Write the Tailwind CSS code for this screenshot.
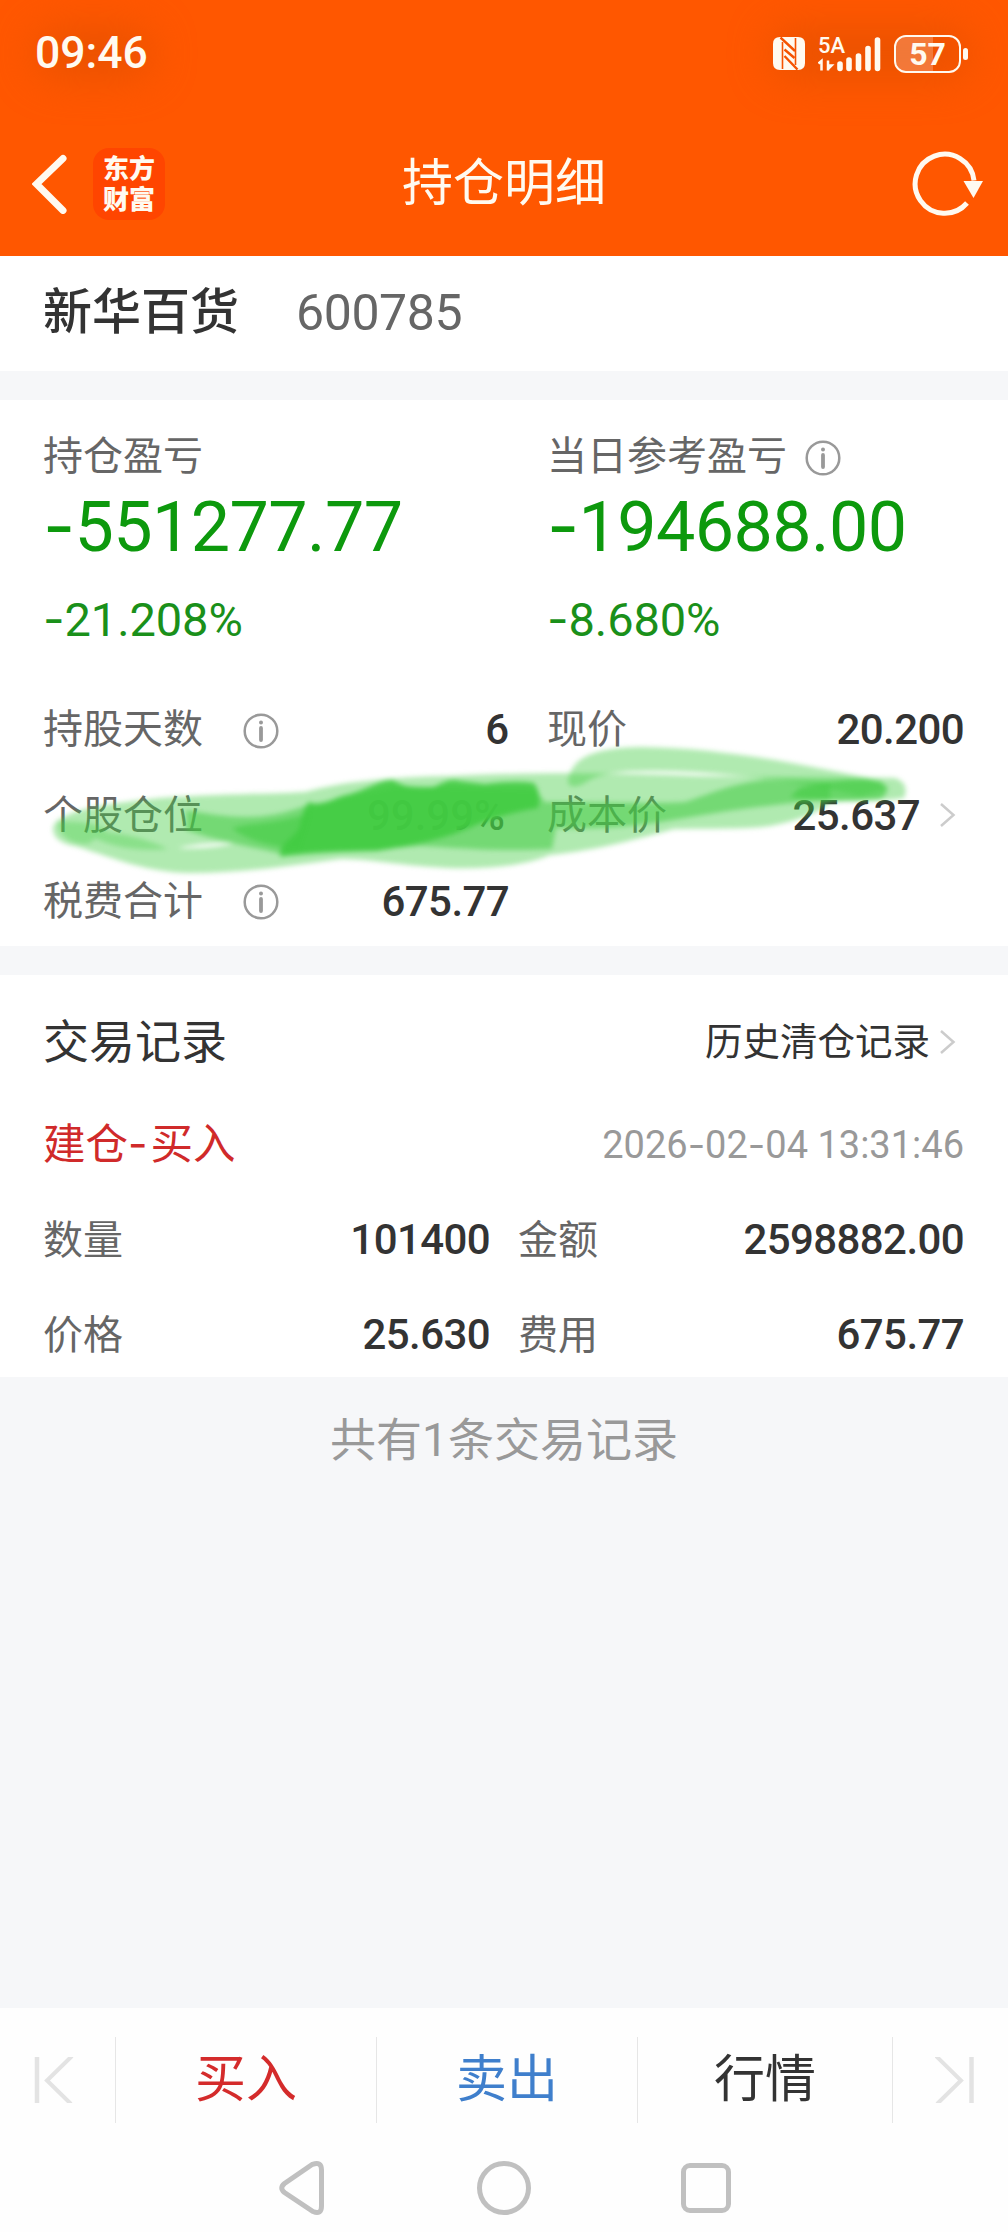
<!DOCTYPE html>
<html lang="zh-CN">
<head>
    <meta charset="UTF-8">
    <meta name="viewport" content="width=device-width, initial-scale=1.0">
    <title>持仓明细</title>
    <script src="https://cdn.jsdelivr.net/npm/@tailwindcss/browser@4"></script>
</head>
<body class="bg-[#f6f7f9] font-[Roboto,'Noto_Sans_CJK_SC',sans-serif] text-[#333]">
    <div class="flex h-[2232px] w-[1008px] flex-col overflow-hidden">

        <!-- Status bar + title bar -->
        <header class="relative h-[256px] shrink-0 overflow-hidden bg-[#ff5700] text-[#fffaf0]">
            <div class="absolute top-[28px] left-[34px] h-[50px] w-[120px] rounded-full bg-[#e25000]/70 blur-[20px]"></div>
            <div class="absolute top-[28px] left-[770px] h-[50px] w-[200px] rounded-full bg-[#e25000]/70 blur-[20px]"></div>

            <div class="relative flex h-[104px] items-center justify-between pt-[3px] pr-[40px] pl-[35px]">
                <span class="text-[44.5px] leading-none font-medium">09:46</span>
                <div class="flex items-center">
                    <svg class="h-[33px] w-[32px]" viewBox="0 0 32 33" fill="#fffaf0">
                        <path d="M7 0H25Q32 0 32 7V26Q32 33 25 33H7Q0 33 0 26V7Q0 0 7 0z"/>
                        <path d="M9.500 5V32M22.500 1V28" fill="none" stroke="#f55300" stroke-width="1.600"/>
                        <path d="M7.500 .5L22 14M11.500 12.500L21.500 21M11.500 19L24.500 32.500" fill="none" stroke="#f55300" stroke-width="2.400"/>
                    </svg>
                    <div class="relative ml-[13px] h-[36px] w-[63px]">
                        <span class="absolute top-0 left-0 text-[22px] leading-[20px] font-medium">5A</span>
                        <svg class="absolute inset-0 h-[36px] w-[63px]" viewBox="0 0 63 36" fill="none" stroke="#fffaf0">
                            <path d="M.5 27.500L3.500 25v9.500M10 24.500v10M10 33l3.500-3.500h-3" stroke-width="2.500"/>
                            <path d="M22 28v4.500M31 24v8.500M40.500 20v12.500M50 12.500v20M59.500 4v28.500" stroke-width="5.600" stroke-linecap="round"/>
                        </svg>
                    </div>
                    <div class="relative ml-[13px] flex h-[38px] w-[67px] items-center justify-center overflow-hidden rounded-[12px] border-[2.500px] border-[#fffaf0]">
                        <div class="absolute inset-y-0 left-0 w-[37px] bg-white/22"></div>
                        <span class="relative text-[32px] leading-none font-bold">57</span>
                    </div>
                    <div class="ml-[2px] h-[12px] w-[5px] rounded-full bg-[#fffaf0]"></div>
                </div>
            </div>

            <div class="relative flex h-[152px] items-center pr-[23px] pl-[32px]">
                <svg class="mt-[8px] h-[60px] w-[36px]" viewBox="0 0 36 60" fill="none" stroke="#fffaf0" stroke-width="7" stroke-linecap="round">
                    <path d="M31 4.500L4.500 30L31 56.500"/>
                </svg>
                <div class="mt-[8px] ml-[25px] flex h-[72px] w-[72px] flex-col items-center justify-center rounded-[16px] bg-[#ff4500] pb-[5px] font-['Noto_Sans_CJK_SC',sans-serif] text-[26px] leading-[31px] font-black">
                    <span>东方</span>
                    <span>财富</span>
                </div>
                <h1 class="absolute inset-x-0 top-[43px] text-center text-[51px] leading-[74px]">持仓明细</h1>
                <svg class="mt-[8px] ml-auto h-[72px] w-[74px]" viewBox="0 0 74 72" fill="none">
                    <path d="M63.500 33.500A29.500 29.500 0 1 0 56.500 56" transform="translate(-.5 -1)" stroke="#fffaf0" stroke-width="5"/>
                    <path d="M52.500 33H72L62.500 50z" fill="#fffaf0"/>
                </svg>
            </div>
        </header>

        <!-- Stock name -->
        <section class="flex h-[115px] shrink-0 items-center bg-white px-[43px] pb-[2px]">
            <span class="text-[49px] leading-none font-medium">新华百货</span>
            <span class="ml-[57px] text-[50px] leading-none tracking-[-0.4px] text-[#666]">600785</span>
        </section>

        <!-- Position details -->
        <section class="relative mt-[29px] h-[546px] shrink-0 bg-white pt-[30px] pr-[44px] pl-[43px] text-[40px]">
            <div class="grid grid-cols-[504px_1fr]">
                <div>
                    <div class="flex h-[50px] items-center pt-[3px] text-[#666]">持仓盈亏</div>
                    <div class="h-[90px] text-[70px] leading-[91px] tracking-[-0.6px] text-[#0d990d]"><span class="font-[Inter]">-</span>551277.77</div>
                    <div class="h-[98px] text-[47px] leading-[98px] tracking-[-0.1px] text-[#1a901a]"><span class="font-[Inter]">-</span>21.208%</div>
                </div>
                <div>
                    <div class="flex h-[50px] items-center pt-[3px] text-[#666]">当日参考盈亏
                        <svg class="mt-[2px] ml-[18px] size-[36px]" viewBox="0 0 36 36" fill="none" stroke="#999" stroke-width="2.500">
                            <circle cx="18" cy="18" r="16.300"/>
                            <path d="M18 15v12" stroke-width="3.800" stroke-linecap="round"/>
                            <circle cx="18" cy="9.500" r="2" fill="#999" stroke="none"/>
                        </svg>
                    </div>
                    <div class="h-[90px] text-[70px] leading-[91px] tracking-[-0.6px] text-[#0d990d]"><span class="font-[Inter]">-</span>194688.00</div>
                    <div class="h-[98px] text-[47px] leading-[98px] tracking-[-0.1px] text-[#1a901a]"><span class="font-[Inter]">-</span>8.680%</div>
                </div>
            </div>

            <div class="mt-[18px] grid grid-cols-[466px_416px] gap-x-[39px]">
                <div class="flex h-[86px] items-center">
                    <span class="pt-[2px] text-[#666]">持股天数</span>
                    <svg class="mt-[3px] ml-[40px] size-[36px]" viewBox="0 0 36 36" fill="none" stroke="#999" stroke-width="2.500">
                        <circle cx="18" cy="18" r="16.300"/>
                        <path d="M18 15v12" stroke-width="3.800" stroke-linecap="round"/>
                        <circle cx="18" cy="9.500" r="2" fill="#999" stroke="none"/>
                    </svg>
                    <span class="ml-auto text-[42px] font-medium">6</span>
                </div>
                <div class="flex h-[86px] items-center justify-between">
                    <span class="-ml-px pt-[2px] text-[#666]">现价</span>
                    <span class="text-[42px] font-medium tracking-[-0.6px]">20.200</span>
                </div>
                <div class="flex h-[86px] items-center justify-between">
                    <span class="pt-[2px] text-[#666]">个股仓位</span>
                    <span class="pr-[4px] text-[42px] font-medium">99.99%</span>
                </div>
                <div class="flex h-[86px] items-center">
                    <span class="-ml-px pt-[2px] text-[#666]">成本价</span>
                    <span class="ml-auto text-[42px] font-medium tracking-[-0.6px]">25.637</span>
                    <svg class="mr-[8px] ml-[19px] h-[26px] w-[17px]" viewBox="0 0 17 26" fill="none" stroke="#ccc" stroke-width="2.500">
                        <path d="M2 2l12.500 11L2 24"/>
                    </svg>
                </div>
                <div class="flex h-[86px] items-center">
                    <span class="pt-[2px] text-[#666]">税费合计</span>
                    <svg class="mt-[2px] ml-[40px] size-[36px]" viewBox="0 0 36 36" fill="none" stroke="#999" stroke-width="2.500">
                        <circle cx="18" cy="18" r="16.300"/>
                        <path d="M18 15v12" stroke-width="3.800" stroke-linecap="round"/>
                        <circle cx="18" cy="9.500" r="2" fill="#999" stroke="none"/>
                    </svg>
                    <span class="ml-auto text-[42px] font-medium tracking-[-0.6px]">675.77</span>
                </div>
            </div>

            <!-- Marker strokes over the position row -->
            <svg class="absolute top-[340px] left-0 h-[150px] w-[1008px] blur-[2.5px]" viewBox="0 740 1008 150" fill="#43cc43">
                <path fill-opacity=".42" d="M53 828C56 812 100 804 160 798C220 794 270 794 305 792C340 782 390 777 450 776C540 772 620 773 700 776L895 778Q910 783 904 798C880 802 850 800 830 802C820 812 800 820 770 826C740 830 710 828 674 829C640 838 600 850 550 855C520 868 470 870 433 867C390 864 370 859 340 859C290 866 240 873 190 873C145 872 120 860 75 846C58 843 53 836 53 828ZM178 848C205 849 225 846 234 843C215 842 190 845 178 848Z"/>
                <path fill-opacity=".42" d="M568 782C570 755 600 748 640 747C720 748 790 762 868 778L890 788L860 796C800 780 720 772 660 771C620 771 600 772 583 784Q570 790 568 782Z"/>
                <path fill-opacity=".35" d="M58 822Q90 820 108 830L88 844Q60 844 58 822ZM95 832C120 832 145 838 168 849C135 852 110 846 95 838Z"/>
                <path fill-opacity=".55" d="M186 810C230 818 262 822 305 806L400 786L535 790L545 802C600 802 650 804 685 802C710 794 730 784 765 780L830 782L830 799C780 804 730 810 685 818C640 826 600 830 556 828L552 849C500 852 460 848 421 846L290 856C250 846 220 842 186 830Z"/>
                <path fill-opacity=".65" d="M800 788Q850 776 880 781Q894 790 880 799C850 802 820 802 790 797Z"/>
                <path fill-opacity=".6" d="M232 828C255 822 280 824 312 812L300 850C270 846 245 840 232 828Z"/>
                <path fill-opacity=".9" d="M281 857C276 845 296 838 300 826C302 816 304 806 309 802C325 808 330 798 350 794C370 788 380 780 393 780C405 788 418 788 433 787C445 782 450 778 460 781L485 784Q515 780 534 783Q542 794 538 808Q510 812 478 824C450 838 410 846 377 851C340 852 310 850 281 857Z"/>
            </svg>
        </section>

        <!-- Trade records -->
        <section class="mt-[29px] h-[402px] shrink-0 bg-white pt-[20px] pr-[44px] pl-[43px]">
            <div class="flex h-[94px] items-center">
                <h2 class="text-[46px]">交易记录</h2>
                <span class="ml-auto text-[37.500px]">历史清仓记录</span>
                <svg class="mr-[8px] ml-[9px] h-[26px] w-[17px]" viewBox="0 0 17 26" fill="none" stroke="#ccc" stroke-width="2.500">
                    <path d="M2 2l12.500 11L2 24"/>
                </svg>
            </div>
            <div class="flex h-[110px] items-center justify-between pt-px">
                <span class="text-[42.500px] text-[#d02a2a]">建仓<span class="pr-[3px] font-[Inter]">-</span>买入</span>
                <span class="text-[38px] text-[#999]">2026<span class="font-[Inter]">-</span>02<span class="font-[Inter]">-</span>04 13:31:46</span>
            </div>
            <div class="grid grid-cols-[447px_445px] gap-x-[29px] text-[40px]">
                <div class="flex h-[80px] items-center justify-between">
                    <span class="pt-[3px] text-[#666]">数量</span>
                    <span class="text-[42px] font-medium tracking-[-0.6px]">101400</span>
                </div>
                <div class="flex h-[80px] items-center justify-between">
                    <span class="-ml-px pt-[3px] text-[#666]">金额</span>
                    <span class="text-[42px] font-medium tracking-[-0.6px]">2598882.00</span>
                </div>
                <div class="mt-[15px] flex h-[80px] items-center justify-between">
                    <span class="pt-[3px] text-[#666]">价格</span>
                    <span class="text-[42px] font-medium tracking-[-0.6px]">25.630</span>
                </div>
                <div class="mt-[15px] flex h-[80px] items-center justify-between">
                    <span class="-ml-px pt-[3px] text-[#666]">费用</span>
                    <span class="text-[42px] font-medium tracking-[-0.6px]">675.77</span>
                </div>
            </div>
        </section>

        <p class="mt-[30px] text-center text-[46px] leading-[66px] text-[#999]">共有1条交易记录</p>

        <!-- Action bar -->
        <footer class="mt-auto h-[224px] shrink-0 bg-[#fefefe]">
            <div class="flex h-[144px] items-center text-[51px]">
                <div class="flex w-[115px] items-center pl-[34px]">
                    <svg class="h-[46px] w-[40px]" viewBox="0 0 40 46" fill="none" stroke="#e3e3e3">
                        <path d="M3 0v46" stroke-width="4.500"/>
                        <path d="M38 -1L13 23.500L37 47" stroke-width="4"/>
                    </svg>
                </div>
                <div class="h-[86px] w-px bg-[#e6e6e6]"></div>
                <div class="w-[260px] text-center text-[#d42b2b]">买入</div>
                <div class="h-[86px] w-px bg-[#e6e6e6]"></div>
                <div class="w-[260px] text-center text-[#3f7fcc]">卖出</div>
                <div class="h-[86px] w-px bg-[#e6e6e6]"></div>
                <div class="w-[254px] text-center">行情</div>
                <div class="h-[86px] w-px bg-[#e6e6e6]"></div>
                <div class="flex flex-1 justify-end pr-[33px]">
                    <svg class="h-[46px] w-[40px]" viewBox="0 0 40 46" fill="none" stroke="#e3e3e3">
                        <path d="M36.500 0v46" stroke-width="4.500"/>
                        <path d="M1 -1L26 23.500L2 47" stroke-width="4"/>
                    </svg>
                </div>
            </div>
            <div class="flex h-[72px] items-center pl-[278px]">
                <svg class="h-[56px] w-[47px]" viewBox="0 0 47 56" fill="none" stroke="#c0c0c0" stroke-width="5">
                    <path d="M34.500 4.300Q43.500 1 43.500 10V46Q43.500 55 35 51.500L6.500 32.500Q1 28 6.500 23.500Z"/>
                </svg>
                <div class="ml-[152px] size-[54px] rounded-full border-[5px] border-[#c0c0c0]"></div>
                <div class="ml-[150px] size-[50px] rounded-[9px] border-[5px] border-[#c0c0c0]"></div>
            </div>
        </footer>
    </div>
</body>
</html>
